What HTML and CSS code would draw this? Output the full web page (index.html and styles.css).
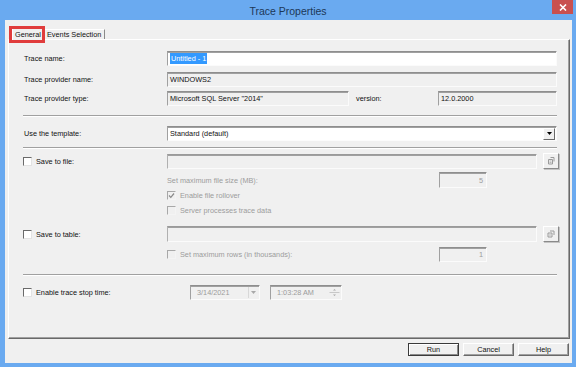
FILE: index.html
```html
<!DOCTYPE html>
<html>
<head>
<meta charset="utf-8">
<title>Trace Properties</title>
<link rel="stylesheet" href="styles.css">
</head>
<body>
<div class="titlebar">
  <span>Trace Properties</span>
  <div class="close"><svg width="8" height="7" viewBox="0 0 8 7"><path d="M1 0.5 L7 6.5 M7 0.5 L1 6.5" stroke="#fff" stroke-width="1.6"/></svg></div>
</div>
<div class="client">
  <div class="tabs">
    <div class="tab active">General</div>
    <div class="tab">Events Selection</div>
  </div>
  <div class="panel">
    <div class="row r1">
      <div class="label">Trace name:</div>
      <div class="field white w390"><span class="sel">Untitled - 1</span></div>
    </div>
    <div class="row r2">
      <div class="label">Trace provider name:</div>
      <div class="field w390">WINDOWS2</div>
    </div>
    <div class="row r3">
      <div class="label">Trace provider type:</div>
      <div class="field w182">Microsoft SQL Server "2014"</div>
      <div class="version">version:</div>
      <div class="field w119">12.0.2000</div>
    </div>
    <div class="sep s1"></div>
    <div class="row r4">
      <div class="label">Use the template:</div>
      <div class="field white w390 combo">
        <span>Standard (default)</span>
        <div class="drop"><svg width="5" height="3" viewBox="0 0 5 3"><path d="M0 0 H5 L2.5 3 Z" fill="#000"/></svg></div>
      </div>
    </div>
    <div class="sep s2"></div>
    <div class="row r5">
      <div class="label check"><span class="box"></span>Save to file:</div>
      <div class="field w370 low"></div>
      <div class="browse"><svg width="8" height="8" viewBox="0 0 8 8"><path d="M1.5 2.5 H5.5 V7 H1.5 Z M3.5 0.5 H7 V4.5" fill="none" stroke="#9a9a9a" stroke-width="1"/><path d="M2.5 4 H4.5 M2.5 5.5 H4.5" stroke="#b8b8b8"/></svg></div>
    </div>
    <div class="row r6">
      <div class="label"></div>
      <div class="dim wide">Set maximum file size (MB):</div>
      <div class="field w48 num dim">5</div>
    </div>
    <div class="row r7">
      <div class="label"></div>
      <div class="check dim"><span class="box off"><svg width="7" height="7" viewBox="0 0 7 7"><path d="M1 3.5 L2.8 5.3 L6 1.5" fill="none" stroke="#8a8a8a" stroke-width="1.2"/></svg></span>Enable file rollover</div>
    </div>
    <div class="row r8">
      <div class="label"></div>
      <div class="check dim"><span class="box off"></span>Server processes trace data</div>
    </div>
    <div class="row r9">
      <div class="label check"><span class="box"></span>Save to table:</div>
      <div class="field w370 low"></div>
      <div class="browse"><svg width="8" height="8" viewBox="0 0 8 8"><path d="M1 3 H5 V7 H1 Z M3 1 H7 V5" fill="none" stroke="#9a9a9a" stroke-width="1"/><path d="M2 5 H4" stroke="#b8b8b8"/></svg></div>
    </div>
    <div class="row r10">
      <div class="label"></div>
      <div class="check dim wide"><span class="box off"></span>Set maximum rows (in thousands):</div>
      <div class="field w48 num dim">1</div>
    </div>
    <div class="sep s3"></div>
    <div class="row r11">
      <div class="label check"><span class="box"></span>Enable trace stop time:</div>
      <div class="field w70 dim picker date">
        <span>3/14/2021</span>
        <div class="pdrop"><svg width="5" height="3" viewBox="0 0 5 3"><path d="M0 0 H5 L2.5 3 Z" fill="#a8a8a8"/></svg></div>
      </div>
      <div class="field w72 dim picker time">
        <span>1:03:28 AM</span>
        <div class="spin"><svg width="11" height="11" viewBox="0 0 11 11"><path d="M0.5 5.5 H10.5" stroke="#c8c8c8"/><path d="M4 3.5 H7 L5.5 2 Z M4 7.5 H7 L5.5 9 Z" fill="#a8a8a8"/></svg></div>
      </div>
    </div>
  </div>
  <div class="buttons">
    <div class="btn default">Run</div>
    <div class="btn">Cancel</div>
    <div class="btn">Help</div>
  </div>
</div>
</body>
</html>
```

FILE: styles.css
```css
* {
  box-sizing: border-box;
}
body {
  margin: 0;
  width: 576px;
  height: 367px;
  overflow: hidden;
  background: #6aaaf0;
  font-family: 'Liberation Sans', Arial, sans-serif;
  font-size: 7.3px;
  color: #111;
}
.titlebar {
  position: relative;
  height: 20px;
  display: flex;
  align-items: center;
  justify-content: center;
  font-size: 10.5px;
  color: #1d3857;
  padding-top: 1px;
}
.close {
  position: absolute;
  top: 0;
  right: 3px;
  width: 21px;
  height: 14px;
  background: #c9504f;
  display: flex;
  align-items: center;
  justify-content: center;
}
.client {
  margin: 0 4px 0 5px;
  height: 343px;
  background: #f0f0f0;
  display: flex;
  flex-direction: column;
}
.tabs {
  display: flex;
  align-items: flex-end;
  height: 12px;
  margin: 7px 0 0 7px;
  position: relative;
  z-index: 1;
}
.tab {
  height: 10px;
  padding: 0 3px 0 3px;
  border: 1px solid #fff;
  border-right-color: #8a8a8a;
  border-bottom: none;
  display: flex;
  align-items: center;
  background: #f0f0f0;
}
.tab.active {
  position: relative;
  width: 31px;
  height: 13px;
  margin-bottom: -1px;
  padding: 0 2px;
  border-right-color: #696969;
}
.tab.active::after {
  content: "";
  position: absolute;
  left: -4px;
  top: -2px;
  right: -3px;
  bottom: -3px;
  border: 3px solid #e03c3c;
}
.panel {
  margin-left: 3px;
  width: 562px;
  height: 300px;
  border-top: 1px solid #fff;
  border-left: 1px solid #fff;
  border-right: 1px solid #696969;
  border-bottom: 1px solid #696969;
  box-shadow: inset -1px -1px 0 #a0a0a0;
  padding-left: 15px;
}
.row {
  display: flex;
  align-items: center;
  height: 15px;
}
.label {
  width: 143px;
  flex: none;
}
.label.check {
  margin-left: -1px;
  width: 144px;
}
.field {
  height: 15px;
  flex: none;
  display: flex;
  align-items: center;
  padding-left: 2px;
  border: 1px solid;
  border-color: #8e8e8e #fbfbfb #fbfbfb #a0a0a0;
  box-shadow: inset 0 1px 0 #a0a0a0;
  white-space: nowrap;
  overflow: hidden;
}
.field.white {
  background: #fff;
}
.w390 { width: 390px; }
.w370 { width: 370px; }
.w182 { width: 182px; }
.w119 { width: 119px; }
.w48 { width: 48px; }
.w70 { width: 70px; }
.w72 { width: 72px; }
.sel {
  background: #3399ff;
  color: #fff;
  padding: 1px 1px;
}
.version {
  width: 89px;
  padding-left: 7px;
}
.sep {
  width: 534px;
  margin-left: -1px;
  height: 2px;
  border-top: 1px solid #a0a0a0;
  border-bottom: 1px solid #fff;
}
.combo {
  justify-content: space-between;
  padding-right: 0;
}
.drop {
  width: 12px;
  height: 12px;
  margin-right: 1px;
  display: flex;
  align-items: center;
  justify-content: center;
  background: #f0f0f0;
  border: 1px solid;
  border-color: #fff #696969 #696969 #fff;
}
.check {
  display: flex;
  align-items: center;
}
.box {
  width: 9px;
  height: 9px;
  margin-right: 4px;
  flex: none;
  background: #fff;
  border: 1px solid;
  border-color: #6a6a6a #e3e3e3 #e3e3e3 #6a6a6a;
  display: flex;
  align-items: center;
  justify-content: center;
}
.box.off {
  background: #f0f0f0;
  border-color: #a8a8a8 #f4f4f4 #f4f4f4 #a8a8a8;
}
.dim {
  color: #9c9c9c;
}
.wide {
  width: 272px;
}
.num {
  justify-content: flex-end;
  padding-right: 3px;
}
.low {
  border-color: #9a9a9a #fbfbfb #fbfbfb #b0b0b0;
}
.browse {
  width: 16px;
  height: 16px;
  margin-left: 6px;
  flex: none;
  display: flex;
  align-items: center;
  justify-content: center;
  border: 1px solid;
  border-color: #fff #8a8a8a #8a8a8a #fff;
  box-shadow: 1px 1px 0 #c4c4c4;
}
.picker {
  justify-content: space-between;
  padding-left: 6px;
  padding-right: 1px;
}
.date {
  margin-left: 23px;
}
.time {
  margin-left: 10px;
}
.pdrop {
  width: 10px;
  height: 11px;
  display: flex;
  align-items: center;
  justify-content: center;
  border-left: 1px solid #d8d8d8;
}
.spin {
  width: 11px;
  height: 11px;
  display: flex;
}
.r1 { margin-top: 11px; }
.r2 { margin-top: 6px; }
.r3 { margin-top: 4px; }
.s1 { margin-top: 9px; }
.r4 { margin-top: 9px; }
.s2 { margin-top: 6px; }
.r5 { margin-top: 4px; height: 16px; }
.r5 .field { margin-top: 1px; }
.r6 { margin-top: 3px; height: 16px; }
.r6 .field { height: 16px; }
.r7 { margin-top: 2px; height: 11px; }
.r8 { margin-top: 4px; height: 11px; }
.r9 { margin-top: 10px; height: 16px; }
.r9 .field { height: 16px; }
.r10 { margin-top: 5px; }
.s3 { margin-top: 12px; }
.r11 { margin-top: 9px; }
.buttons {
  display: flex;
  justify-content: flex-end;
  gap: 4px;
  margin-top: 4px;
  padding-right: 3px;
}
.btn {
  width: 51px;
  height: 13px;
  display: flex;
  align-items: center;
  justify-content: center;
  background: #f0f0f0;
  border: 1px solid;
  border-color: #fff #696969 #696969 #fff;
  box-shadow: inset -1px -1px 0 #a0a0a0;
}
.btn.default {
  border-color: #3a3a3a;
  box-shadow: inset 1px 1px 0 #fff, inset -1px -1px 0 #8a8a8a;
}
```
